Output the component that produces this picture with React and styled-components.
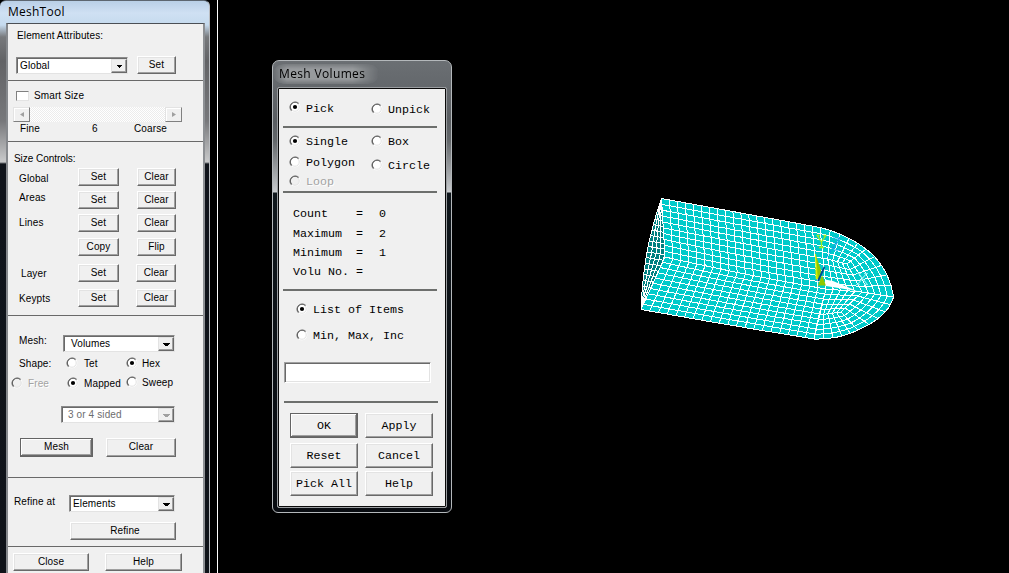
import React from "react";
import styled, { createGlobalStyle, css } from "styled-components";

const Global = createGlobalStyle`
  html, body { margin: 0; padding: 0; background: #000; overflow: hidden; }
  * { box-sizing: border-box; }
`;

const Desktop = styled.div`
  display: flex;
  align-items: flex-start;
  width: 1009px;
  height: 573px;
  overflow: hidden;
  background: #000;
`;

/* ---------- shared pieces ---------- */

const place = css`
  flex: none;
  margin-left: ${(p) => p.$l || 0}px;
  margin-top: ${(p) => p.$t || 0}px;
`;

const Row = styled.div`
  display: flex;
  align-items: flex-start;
  height: ${(p) => p.$h}px;
`;

const Label = styled.span`
  ${place}
  width: ${(p) => (p.$w ? p.$w + "px" : "auto")};
  line-height: 12px;
  white-space: pre;
  letter-spacing: ${(p) => (p.$ls === undefined ? "inherit" : p.$ls + "px")};
  color: ${(p) => (p.$off ? "#a3a3a3" : "#000")};
  text-shadow: ${(p) => (p.$off ? "1px 1px 0 #fff" : "none")};
`;

const Button = styled.button`
  ${place}
  display: flex;
  align-items: center;
  justify-content: center;
  width: ${(p) => p.$w}px;
  height: ${(p) => p.$h || 18}px;
  padding: ${(p) => p.$pad || "0 0 1px 0"};
  font: inherit;
  letter-spacing: inherit;
  line-height: 12px;
  color: #000;
  background: #f0f0f0;
  border: 1px solid;
  border-color: #fff #696969 #696969 #fff;
  border-radius: 0;
  box-shadow: inset -1px -1px 0 #a0a0a0, inset 1px 1px 0 #e3e3e3;
  ${(p) =>
    p.$primary &&
    css`
      border-color: #646464;
      box-shadow: inset -1px -1px 0 #696969, inset 1px 1px 0 #fff, inset -2px -2px 0 #a0a0a0;
    `}
`;

const RadioSvg = styled.svg`
  ${place}
  display: block;
  width: 12px;
  height: 12px;
`;

function Radio({ on, off, l, t }) {
  return (
    <RadioSvg $l={l} $t={t} viewBox="0 0 12 12">
      <circle cx="6" cy="6" r="5" fill={off ? "#f0f0f0" : "#fff"} />
      <path d="M9.600 2.400A5.100 5.100 0 0 1 2.400 9.600" fill="none" stroke="#fff" strokeWidth="1" />
      <path d="M9 3A4.200 4.200 0 0 1 3 9" fill="none" stroke="#e3e3e3" strokeWidth="1" />
      <path d="M9.800 2.200A5.400 5.400 0 0 0 2.200 9.800" fill="none" stroke="#a0a0a0" strokeWidth="1" />
      <path d="M9.400 2.700A4.650 4.650 0 0 0 2.700 9.400" fill="none" stroke="#606060" strokeWidth="1.100" />
      {on && <circle cx="6" cy="6" r="2.100" fill="#000" />}
    </RadioSvg>
  );
}

/* ---------- MeshTool window ---------- */

const ToolWindow = styled.div`
  flex: none;
  width: 210px;
  height: 573px;
  padding: 0 0 0 1px;
  display: flex;
  flex-direction: column;
  border-right: 1px solid #b9bcc0;
  border-top: 1px solid #5d6670;
  border-radius: 6px 6px 0 0;
  background: linear-gradient(
    to bottom,
    #b9cfe6 0,
    #cfe0f3 12px,
    #c5daee 24px,
    #77797c 36px,
    #626366 60px,
    #77787b 120px,
    #c9cacb 161px,
    #10141b 163px,
    #0f1319 100%
  );
`;

const ToolTitle = styled.div`
  height: 22px;
  padding-left: 7px;
  font: 12px/22px "Open Sans", "Noto Sans", sans-serif;
  letter-spacing: 0.25px;
  color: #000;
`;

const ToolBody = styled.div`
  width: 199px;
  margin-left: 5px;
  flex: 1;
  border: solid #85888c;
  border-width: 1px 2px 0 2px;
  border-top-color: #4b4f55;
  border-right-color: #8d9094;
  background: #f0f0f0;
  font: 10px/12px "Liberation Sans", Arial, sans-serif;
  letter-spacing: 0.12px;
`;

const Section = styled.section`
  height: ${(p) => p.$h}px;
  overflow: hidden;
  border-bottom: 1px solid #696969;
`;

const SelectBox = styled.div`
  ${place}
  display: flex;
  width: ${(p) => p.$w}px;
  height: 17px;
  padding-left: ${(p) => p.$pad || 3}px;
  background: #fff;
  border: 1px solid;
  border-color: #8a8a8a #e3e3e3 #e3e3e3 #8a8a8a;
  box-shadow: inset 1px 1px 0 #696969;
  color: ${(p) => (p.$off ? "#6d6d6d" : "#000")};
  line-height: 16px;
`;

const SelectText = styled.span`
  flex: 1;
  white-space: pre;
`;

const SelectArrow = styled.span`
  width: 16px;
  height: 14px;
  margin-top: 1px;
  display: flex;
  align-items: center;
  justify-content: center;
  background: #f0f0f0;
  border: 1px solid;
  border-color: #e3e3e3 #696969 #696969 #e3e3e3;
  box-shadow: inset -1px -1px 0 #a0a0a0;
`;

function Select({ children, off, small, ...rest }) {
  return (
    <SelectBox $off={off} {...rest}>
      <SelectText>{children}</SelectText>
      <SelectArrow>
        {small ? (
          <svg width="5" height="3" viewBox="0 0 5 3" shapeRendering="crispEdges">
            <path d="M0 0H5V1H4V2H3V3H2V2H1V1H0Z" fill="#000" />
          </svg>
        ) : (
          <svg width="7" height="3" viewBox="0 0 7 3" shapeRendering="crispEdges">
            <path d="M0 0H7V1H6V2H5V3H2V2H1V1H0Z" fill={off ? "#a0a0a0" : "#000"} />
          </svg>
        )}
      </SelectArrow>
    </SelectBox>
  );
}

const CheckBox = styled.span`
  ${place}
  width: 13px;
  height: 10px;
  background: #fff;
  border: 1px solid;
  border-color: #808080 #e3e3e3 #e3e3e3 #808080;
`;

const Slider = styled.div`
  display: flex;
  justify-content: space-between;
  width: 169px;
  height: 15px;
  margin-left: 5px;
  background: repeating-conic-gradient(#fff 0 25%, #ececec 0 50%) 0 0 / 2px 2px;
`;

const SliderEnd = styled.span`
  width: 17px;
  height: 15px;
  display: flex;
  align-items: center;
  justify-content: center;
  background: #f0f0f0;
  border: 1px solid;
  border-color: #e3e3e3 #808080 #808080 #e3e3e3;
  box-shadow: inset 1px 1px 0 #fff;
`;

function SizeRow({ h, label, lt, ll = 11, a, b, bl = 18, bw = 39 }) {
  return (
    <Row $h={h}>
      <Label $l={ll} $t={lt} $w={70 - ll}>{label}</Label>
      <Button $w={41}>{a}</Button>
      <Button $l={bl} $w={bw}>{b}</Button>
    </Row>
  );
}

function MeshTool() {
  return (
    <ToolWindow>
      <ToolTitle>MeshTool</ToolTitle>
      <ToolBody>
        <Section $h={57}>
          <Row $h={32}>
            <Label $l={9} $t={6}>Element Attributes:</Label>
          </Row>
          <Row $h={22}>
            <Select small $l={8} $t={1} $w={112}>Global</Select>
            <Button $l={9} $w={39}>Set</Button>
          </Row>
        </Section>
        <Section $h={61}>
          <Row $h={26}>
            <CheckBox $l={8} $t={10} />
            <Label $l={5} $t={9}>Smart Size</Label>
          </Row>
          <Slider>
            <SliderEnd>
              <svg width="4" height="5" viewBox="0 0 4 5"><path d="M4 0V5L0 2.500Z" fill="#a0a0a0" /></svg>
            </SliderEnd>
            <SliderEnd>
              <svg width="4" height="5" viewBox="0 0 4 5"><path d="M0 0V5L4 2.500Z" fill="#a0a0a0" /></svg>
            </SliderEnd>
          </Slider>
          <Row $h={18}>
            <Label $l={12} $t={1} $w={72}>Fine</Label>
            <Label $t={1} $w={42}>6</Label>
            <Label $t={1}>Coarse</Label>
          </Row>
        </Section>
        <Section $h={174}>
          <Row $h={26}>
            <Label $l={6} $t={11} $ls={-0.05}>Size Controls:</Label>
          </Row>
          <SizeRow h={23} label="Global" lt={5} a="Set" b="Clear" />
          <SizeRow h={23} label="Areas" lt={1} a="Set" b="Clear" />
          <SizeRow h={24} label="Lines" lt={3} a="Set" b="Clear" />
          <SizeRow h={26} label="" lt={0} a="Copy" b="Flip" />
          <SizeRow h={25} label="Layer" ll={13} lt={4} a="Set" b="Clear" bl={17} bw={40} />
          <SizeRow h={25} label="Keypts" lt={4} a="Set" b="Clear" bl={17} bw={40} />
        </Section>
        <Section $h={162}>
          <Row $h={41}>
            <Label $l={11} $t={19} $w={44}>Mesh:</Label>
            <Select $t={19} $w={112} $pad={7}>Volumes</Select>
          </Row>
          <Row $h={19}>
            <Label $l={11} $t={1} $w={47}>Shape:</Label>
            <Radio t={0} />
            <Label $l={6} $t={1} $w={42}>Tet</Label>
            <Radio on t={0} />
            <Label $l={4} $t={1}>Hex</Label>
          </Row>
          <Row $h={30}>
            <Radio off l={3} t={1} />
            <Label $off $l={5} $t={2} $w={39}>Free</Label>
            <Radio on t={1} />
            <Label $l={5} $t={2} $w={42}>Mapped</Label>
            <Radio t={0} />
            <Label $l={4} $t={1}>Sweep</Label>
          </Row>
          <Row $h={32}>
            <Select $l={53} $w={114} $pad={6} off>3 or 4 sided</Select>
          </Row>
          <Row $h={24}>
            <Button $primary $l={12} $w={73} $h={19}>Mesh</Button>
            <Button $l={13} $w={70} $h={19}>Clear</Button>
          </Row>
        </Section>
        <Section $h={69}>
          <Row $h={44}>
            <Label $l={6} $t={18} $w={55}>Refine at</Label>
            <Select $t={17} $w={106}>Elements</Select>
          </Row>
          <Row $h={20}>
            <Button $l={62} $w={106} $pad="0 0 1px 4px">Refine</Button>
          </Row>
        </Section>
        <Row $h={26}>
          <Button $l={5} $t={6} $w={76}>Close</Button>
          <Button $l={16} $t={6} $w={77}>Help</Button>
        </Row>
      </ToolBody>
    </ToolWindow>
  );
}

/* ---------- Mesh Volumes dialog ---------- */

const Dialog = styled.div`
  flex: none;
  width: 180px;
  height: 453px;
  margin: 60px 0 0 54px;
  padding: 0 4px 4px;
  display: flex;
  flex-direction: column;
  border: 1px solid #b4b8bb;
  border-radius: 7px 7px 6px 6px;
  background: linear-gradient(
    to bottom,
    #6b6f73 0,
    #5a5e62 60px,
    #64686b 80px,
    #c3c6c9 129px,
    #cfd2d4 131px,
    #10171c 132px,
    #080b10 100%
  );
`;

const DialogTitle = styled.div`
  height: 26px;
  display: flex;
  align-items: center;
  span {
    margin-left: -4px;
    padding: 0 14px 0 6px;
    font: 12px/20px "Open Sans", "Noto Sans", sans-serif;
    letter-spacing: 0.35px;
    color: #000;
    border-radius: 10px;
    background: linear-gradient(
      to right,
      rgba(160, 163, 165, 0) 0,
      rgba(160, 163, 165, 0.85) 14px,
      rgba(160, 163, 165, 0.85) 75%,
      rgba(160, 163, 165, 0) 100%
    );
    mask-image: linear-gradient(to bottom, rgba(0, 0, 0, 0.3) 0, #000 25%, #000 75%, rgba(0, 0, 0, 0.3) 100%);
  }
`;

const DialogBody = styled.div`
  flex: 1;
  width: 170px;
  border: 1px solid #9a9da0;
  border-radius: 2px;
  background: #f0f0f0;
  box-shadow: inset 0 0 0 1px #0a0a0a;
  padding: 1px;
  font: 11.67px/12px "Liberation Mono", "Courier New", monospace;
`;

const Rule = styled.div`
  height: 2px;
  width: 154px;
  margin-left: ${(p) => p.$l || 4}px;
  background: #6d6f6d;
`;

const TextField = styled.div`
  ${place}
  width: 147px;
  height: 21px;
  background: #fff;
  border: 1px solid;
  border-color: #a0a0a0 #fff #fff #a0a0a0;
  box-shadow: inset 1px 1px 0 #696969, inset -1px -1px 0 #e3e3e3;
`;

function StatRow({ h, name, value }) {
  return (
    <Row $h={h}>
      <Label $l={14} $w={63}>{name}</Label>
      <Label $w={23}>=</Label>
      <Label>{value}</Label>
    </Row>
  );
}

function ButtonPair({ a, b, h, primary }) {
  return (
    <Row $h={h}>
      <Button $primary={primary} $l={11} $w={68} $h={25} $pad="1px 0 0 0">{a}</Button>
      <Button $l={7} $w={68} $h={25} $pad="1px 0 0 0">{b}</Button>
    </Row>
  );
}

function MeshVolumes() {
  return (
    <Dialog>
      <DialogTitle><span>Mesh Volumes</span></DialogTitle>
      <DialogBody>
        <Row $h={37}>
          <Radio on l={10} t={12} />
          <Label $l={5} $t={14} $w={65}>Pick</Label>
          <Radio t={14} />
          <Label $l={5} $t={15}>Unpick</Label>
        </Row>
        <Rule />
        <Row $h={28}>
          <Radio on l={10} t={7} />
          <Label $l={5} $t={8} $w={65}>Single</Label>
          <Radio t={7} />
          <Label $l={5} $t={8}>Box</Label>
        </Row>
        <Row $h={19}>
          <Radio l={10} t={0} />
          <Label $l={5} $t={1} $w={65}>Polygon</Label>
          <Radio t={3} />
          <Label $l={5} $t={4}>Circle</Label>
        </Row>
        <Row $h={16}>
          <Radio off l={10} t={0} />
          <Label $off $l={5} $t={1}>Loop</Label>
        </Row>
        <Rule />
        <Row $h={15} />
        <StatRow h={20} name="Count" value="0" />
        <StatRow h={19} name="Maximum" value="2" />
        <StatRow h={19} name="Minimum" value="1" />
        <StatRow h={23} name="Volu No." value="" />
        <Rule />
        <Row $h={38}>
          <Radio on l={17} t={12} />
          <Label $l={5} $t={13}>List of Items</Label>
        </Row>
        <Row $h={33}>
          <Radio l={17} t={0} />
          <Label $l={5} $t={1}>Min, Max, Inc</Label>
        </Row>
        <Row $h={39}>
          <TextField $l={5} />
        </Row>
        <Rule $l={5} />
        <Row $h={10} />
        <ButtonPair h={30} a="OK" b="Apply" primary />
        <ButtonPair h={28} a="Reset" b="Cancel" />
        <ButtonPair h={25} a="Pick All" b="Help" />
      </DialogBody>
    </Dialog>
  );
}

/* ---------- meshed solid ---------- */

const MeshSvg = styled.svg`
  flex: none;
  display: block;
  width: 270px;
  height: 155px;
  margin: 190px 0 0 178px;
`;

const line = (a, b) => (t) => [a[0] + (b[0] - a[0]) * t, a[1] + (b[1] - a[1]) * t];
const quad = (a, c, b) => (t) => {
  const s = 1 - t;
  return [0, 1].map((i) => s * s * a[i] + 2 * s * t * c[i] + t * t * b[i]);
};

/* Coons patch: top/bottom run left to right, left/right run top to bottom */
function patch(top, bottom, left, right, nu, nv) {
  const at = (u, v) =>
    [0, 1].map(
      (i) =>
        (1 - v) * top(u)[i] + v * bottom(u)[i] + (1 - u) * left(v)[i] + u * right(v)[i] -
        ((1 - u) * (1 - v) * top(0)[i] + u * (1 - v) * top(1)[i] + (1 - u) * v * bottom(0)[i] + u * v * bottom(1)[i])
    );
  const pt = (u, v) => at(u, v).map((n) => n.toFixed(1)).join(" ");
  let d = "";
  const N = 10;
  for (let i = 0; i <= nu; i++) {
    d += "M" + Array.from({ length: N + 1 }, (_, k) => pt(i / nu, k / N)).join("L");
  }
  for (let j = 0; j <= nv; j++) {
    d += "M" + Array.from({ length: N + 1 }, (_, k) => pt(k / N, j / nv)).join("L");
  }
  return d;
}

const A = [661.5, 198.5];
const D = [665, 257];
const G = [641, 309.5];
const T = [820, 227.5];
const S = [826, 289];
const B = [814, 339];
const P = [893.5, 297];
const TP = [866, 249];
const PS = [862, 292];
const TS = [823, 258];
const C1 = [847, 264];
const BP = [858, 330];
const BS = [819, 315];
const C2 = [841, 312];

const topEdge = quad(A, [741, 213], T);
const seam = quad(D, [745, 275], S);
const bottomEdge = quad(G, [728, 325], B);
const faceCurve = quad(A, [643, 250], G);

const body = [
  patch(topEdge, seam, line(A, D), line(T, S), 20, 10),
  patch(seam, bottomEdge, line(D, G), line(S, B), 20, 10),
  patch(quad(T, [846, 234], TP), line(TS, C1), line(T, TS), line(TP, C1), 5, 5),
  patch(line(TS, C1), line(S, PS), line(TS, S), line(C1, PS), 5, 5),
  patch(line(C1, TP), line(PS, P), line(C1, PS), quad(TP, [889, 267], P), 5, 5),
  patch(line(BS, C2), quad(B, [839, 339.5], BP), line(BS, B), line(C2, BP), 5, 5),
  patch(line(S, PS), line(BS, C2), line(S, BS), line(PS, C2), 5, 5),
  patch(line(PS, P), line(C2, BP), line(PS, C2), quad(P, [888, 317], BP), 5, 5),
].join("");

const innerEdge = (t) => (t < 0.52 ? line(A, D)(t / 0.52) : line(D, G)((t - 0.52) / 0.48));
const face = patch(faceCurve, innerEdge, () => A, () => G, 20, 4);

const outline =
  "M661.5 198.5Q741 213 820 227.5Q846 234 866 249Q889 267 893.5 297Q888 317 858 330Q839 339.5 814 339Q728 325 641 309.5L665 257Z";

function Viewport() {
  return (
    <MeshSvg viewBox="630 190 270 155">
      <g shapeRendering="crispEdges">
        <path d="M661.5 198.5Q643 250 641 309.5L665 257Z" fill="#008080" />
        <path d={face} fill="none" stroke="#fff" strokeWidth="1" />
        <path d={outline} fill="#00caca" />
        <path d={body} fill="none" stroke="#fff" strokeWidth="1" />
      </g>
      <path d="M839 238L826 258" stroke="#0a9ee8" strokeWidth="1.200" strokeDasharray="3 2" />
      <path d="M833 238h7l-7 12h7" fill="none" stroke="#12a9ea" strokeWidth="1" />
      <path d="M815.5 254L821 270L820 279H816.5Z" fill="#8fc800" />
      <path d="M815.5 254L817.5 279H816Z" fill="#d8f000" stroke="#d8f000" strokeWidth="0.600" />
      <path d="M822 275L826 285.500H818Z" fill="#8fc800" />
      <path d="M824.500 267L818 281" stroke="#004c92" strokeWidth="1.800" />
      <path d="M825 279.500L833 281L857 291L826 286Z" fill="#fff" />
      <path
        d="M816.500 235.500h3m4 0h3M817.500 236l4 6l4-6M821.500 242v5M819 247.500h5"
        fill="none"
        stroke="#a4ee1c"
        strokeWidth="1.300"
      />
      <path
        d="M857 273.500h4m3 0h4M859 274l8 10M866 274l-8 10M856 284.500h4m4 0h4"
        fill="none"
        stroke="#8ff0f4"
        strokeWidth="1.200"
      />
    </MeshSvg>
  );
}

const ViewEdge = styled.div`
  flex: none;
  width: 1px;
  height: 573px;
  margin-left: 7px;
  background: #fff;
`;

export default function App() {
  return (
    <Desktop>
      <Global />
      <MeshTool />
      <ViewEdge />
      <MeshVolumes />
      <Viewport />
    </Desktop>
  );
}
